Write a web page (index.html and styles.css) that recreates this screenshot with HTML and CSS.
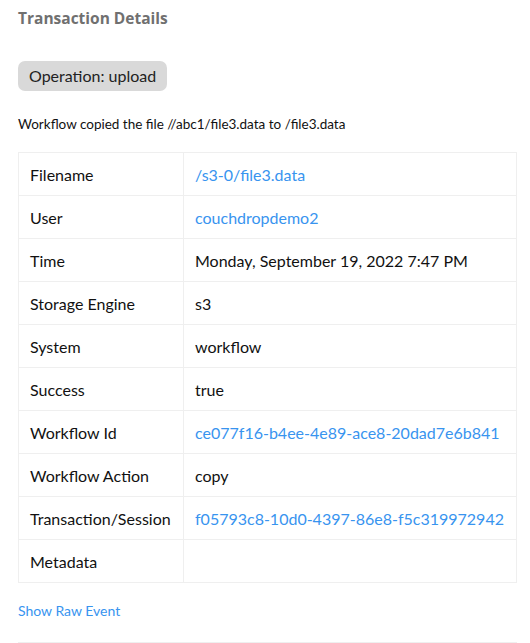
FILE: index.html
```html
<!DOCTYPE html>
<html lang="en">
<head>
  <meta charset="UTF-8" />
  <title>Transaction Details</title>
  <link rel="stylesheet" href="styles.css">
</head>
<body>

  <h2>Transaction Details</h2>

  <div class="badge">Operation: upload</div>

  <p class="summary">Workflow copied the file //abc1/file3.data to /file3.data</p>

  <table class="details">
    <tr><td>Filename</td><td><a href="#">/s3-0/file3.data</a></td></tr>
    <tr><td>User</td><td><a href="#">couchdropdemo2</a></td></tr>
    <tr><td>Time</td><td>Monday, September 19, 2022 7:47 PM</td></tr>
    <tr><td>Storage Engine</td><td>s3</td></tr>
    <tr><td>System</td><td>workflow</td></tr>
    <tr><td>Success</td><td>true</td></tr>
    <tr><td>Workflow Id</td><td><a href="#">ce077f16-b4ee-4e89-ace8-20dad7e6b841</a></td></tr>
    <tr><td>Workflow Action</td><td>copy</td></tr>
    <tr><td>Transaction/Session</td><td><a href="#">f05793c8-10d0-4397-86e8-f5c319972942</a></td></tr>
    <tr><td>Metadata</td><td></td></tr>
  </table>

  <a class="raw" href="#">Show Raw Event</a>

  <div class="footer"></div>
</body>
</html>
```

FILE: styles.css
```css
body {
  margin: 0;
  padding: 0 13px 0 18px;
  background: #fff;
  color: #111;
  font-family: 'Lato', 'Noto Sans', sans-serif;
}

h2 {
  margin: 7px 0 0;
  font-family: 'Open Sans', sans-serif;
  font-size: 15.5px;
  font-weight: 700;
  color: #707070;
  line-height: 22px;
}

.badge {
  display: inline-block;
  margin-top: 32px;
  padding: 0 11px;
  height: 30px;
  line-height: 30px;
  background: #d9d9d9;
  border-radius: 7px;
  font-size: 16px;
  color: #222;
}

.summary {
  margin: 24px 0 0;
  font-size: 13.5px;
  line-height: 18px;
}

.details {
  margin-top: 19px;
  width: 499px;
  border-collapse: collapse;
  font-size: 16px;
}

.details td {
  height: 42px;
  padding: 0 11px;
  border: 1px solid #efefef;
}

.details td:first-child {
  width: 142px;
}

a {
  color: #3894ef;
  text-decoration: none;
}

.raw {
  display: inline-block;
  margin-top: 19px;
  font-size: 14px;
}

.footer {
  margin-top: 23px;
  border-top: 1px solid #efefef;
}
```
